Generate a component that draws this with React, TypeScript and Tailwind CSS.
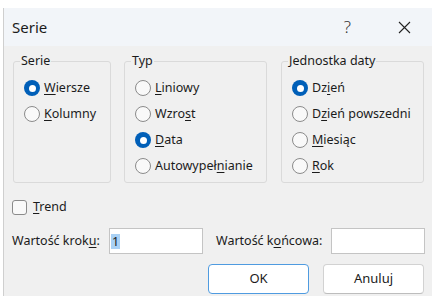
function Radio({ checked = false }: { checked?: boolean }) {
  if (checked) {
    return (
      <span className="flex h-[16px] w-[16px] shrink-0 items-center justify-center rounded-full bg-[#005fb8]">
        <span className="h-[7px] w-[7px] rounded-full bg-white" />
      </span>
    );
  }
  return <span className="h-[16px] w-[16px] shrink-0 rounded-full border border-[#8b8b8b] bg-[#f9f9f9]" />;
}

function Opt({ pre = "", u, post = "", checked = false }: { pre?: string; u: string; post?: string; checked?: boolean }) {
  return (
    <div className="flex h-[26px] items-center gap-[4px] pl-[10px]">
      <Radio checked={checked} />
      <span className="whitespace-nowrap">
        {pre}
        <u className="underline-offset-[2px] decoration-1">{u}</u>
        {post}
      </span>
    </div>
  );
}

function Group({ title, width, children }: { title: string; width: string; children: React.ReactNode }) {
  return (
    <fieldset className={`${width} rounded-[3px] border border-[#dadada] pb-[3px]`}>
      <legend className="ml-[6px] px-[1px] leading-[18px]">{title}</legend>
      <div className="pt-[5px]">{children}</div>
    </fieldset>
  );
}

export default function App() {
  return (
    <div
      className="h-[296px] w-[432px] overflow-hidden bg-white pl-[3px] pt-[8px] text-[12.5px] text-[#1b1b1b]"
      style={{ fontFamily: '"Noto Sans", "Liberation Sans", sans-serif' }}
    >
      <div className="h-[288px] border-l border-[#cfcfcf] bg-[#f0f0f0]">
        {/* title bar */}
        <div className="flex h-[38px] items-center bg-[#f2f5f9] pl-[8px]">
          <span className="text-[15px]">Serie</span>
          <span className="ml-auto mr-[47px] text-[17px] font-light text-[#333]">?</span>
          <svg width="13" height="13" viewBox="0 0 13 13" className="mr-[21px]">
            <path d="M1 1 L12 12 M12 1 L1 12" stroke="#222" strokeWidth="1.1" />
          </svg>
        </div>

        <div className="pl-[9px] pr-[8px] pt-[6px]">
          <div className="flex items-stretch">
            <Group title="Serie" width="w-[98px]">
              <Opt u="W" post="iersze" checked />
              <Opt u="K" post="olumny" />
            </Group>
            <div className="ml-[13px]">
              <Group title="Typ" width="w-[143px] h-full">
                <Opt u="L" post="iniowy" />
                <Opt pre="Wzro" u="s" post="t" />
                <Opt u="D" post="ata" checked />
                <Opt pre="Autowypeł" u="n" post="ianie" />
              </Group>
            </div>
            <div className="ml-[14px]">
              <Group title="Jednostka daty" width="w-[143px] h-full">
                <Opt pre="Dz" u="i" post="eń" checked />
                <Opt pre="D" u="z" post="ień powszedni" />
                <Opt u="M" post="iesiąc" />
                <Opt u="R" post="ok" />
              </Group>
            </div>
          </div>
        </div>

        {/* trend */}
        <div className="mt-[14px] flex h-[20px] items-center gap-[6px] pl-[8px]">
          <span className="h-[15px] w-[15px] rounded-[3px] border border-[#8b8b8b] bg-[#f9f9f9]" />
          <span>
            <u className="underline-offset-[2px] decoration-1">T</u>rend
          </span>
        </div>

        {/* step / end values */}
        <div className="mt-[11px] flex h-[26px] items-center pl-[8px]">
          <span className="w-[97px] whitespace-nowrap">
            Wartość krok<u className="underline-offset-[2px] decoration-1">u</u>:
          </span>
          <div className="flex h-[26px] w-[94px] items-center border border-[#c4c4c4] bg-white pl-[1px]">
            <span className="bg-[#a9d1f5] px-[1px] leading-[15px]">1</span>
          </div>
          <span className="ml-[13px] w-[115px] whitespace-nowrap">
            Wartość k<u className="underline-offset-[2px] decoration-1">o</u>ńcowa:
          </span>
          <div className="h-[26px] w-[94px] border border-[#c4c4c4] bg-white" />
        </div>

        {/* buttons */}
        <div className="mt-[10px] flex justify-end gap-[14px] pr-[8px]">
          <button className="h-[30px] w-[101px] rounded-[4px] border border-[#4f9be0] bg-white text-[13px]">OK</button>
          <button className="h-[30px] w-[101px] rounded-[4px] border border-[#d2d2d2] border-b-[#bdbdbd] bg-white text-[13px]">
            Anuluj
          </button>
        </div>
      </div>
    </div>
  );
}
